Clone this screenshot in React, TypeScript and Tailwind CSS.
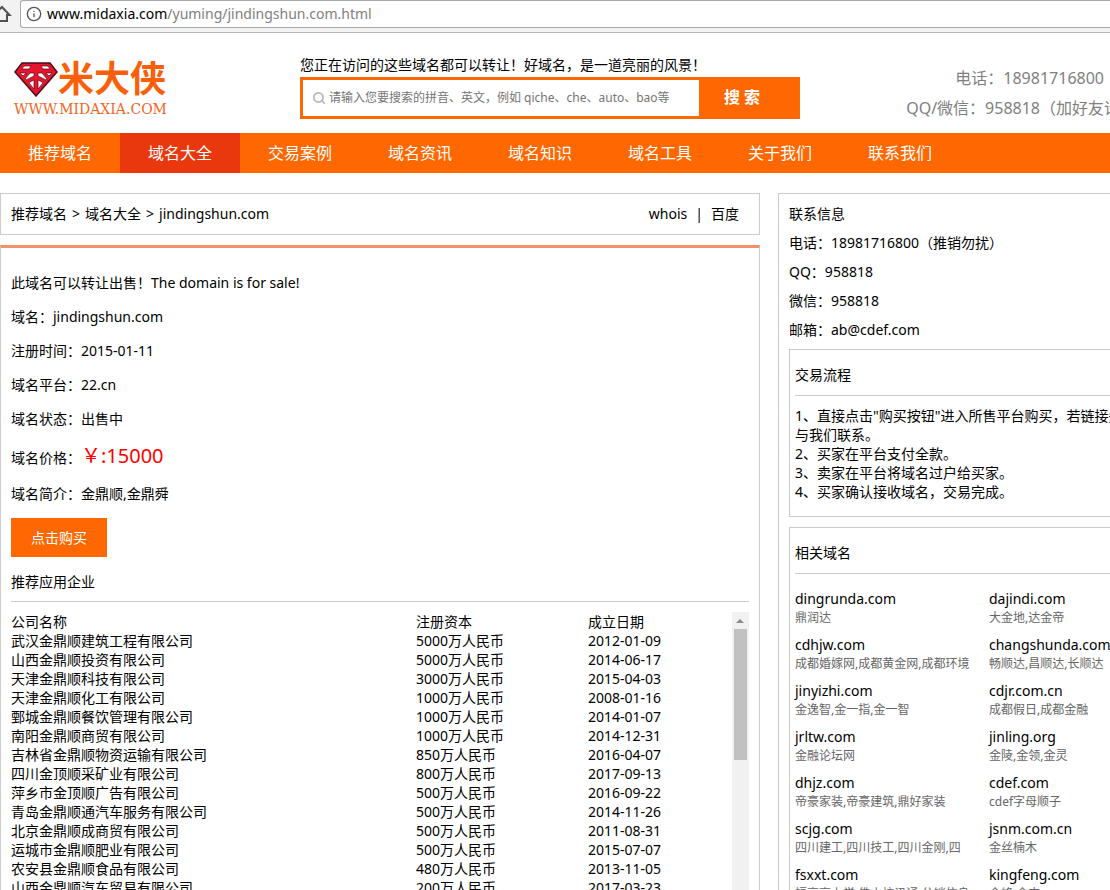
import { Info, Search } from "lucide-react";

const navItems = ["推荐域名", "域名大全", "交易案例", "域名资讯", "域名知识", "域名工具", "关于我们", "联系我们"];

const details = [
  { label: "域名", value: "jindingshun.com" },
  { label: "注册时间", value: "2015-01-11" },
  { label: "域名平台", value: "22.cn" },
  { label: "域名状态", value: "出售中" },
];

const companies = [
  { name: "武汉金鼎顺建筑工程有限公司", capital: "5000万人民币", date: "2012-01-09" },
  { name: "山西金鼎顺投资有限公司", capital: "5000万人民币", date: "2014-06-17" },
  { name: "天津金鼎顺科技有限公司", capital: "3000万人民币", date: "2015-04-03" },
  { name: "天津金鼎顺化工有限公司", capital: "1000万人民币", date: "2008-01-16" },
  { name: "鄄城金鼎顺餐饮管理有限公司", capital: "1000万人民币", date: "2014-01-07" },
  { name: "南阳金鼎顺商贸有限公司", capital: "1000万人民币", date: "2014-12-31" },
  { name: "吉林省金鼎顺物资运输有限公司", capital: "850万人民币", date: "2016-04-07" },
  { name: "四川金顶顺采矿业有限公司", capital: "800万人民币", date: "2017-09-13" },
  { name: "萍乡市金顶顺广告有限公司", capital: "500万人民币", date: "2016-09-22" },
  { name: "青岛金鼎顺通汽车服务有限公司", capital: "500万人民币", date: "2014-11-26" },
  { name: "北京金鼎顺成商贸有限公司", capital: "500万人民币", date: "2011-08-31" },
  { name: "运城市金鼎顺肥业有限公司", capital: "500万人民币", date: "2015-07-07" },
  { name: "农安县金鼎顺食品有限公司", capital: "480万人民币", date: "2013-11-05" },
  { name: "山西金鼎顺汽车贸易有限公司", capital: "200万人民币", date: "2017-03-23" },
];

const contacts = ["电话：18981716800（推销勿扰）", "QQ：958818", "微信：958818", "邮箱：ab@cdef.com"];

const steps = [
  "直接点击\"购买按钮\"进入所售平台购买，若链接失效时，请与我们联系。",
  "买家在平台支付全款。",
  "卖家在平台将域名过户给买家。",
  "买家确认接收域名，交易完成。",
];

const related = [
  { domain: "dingrunda.com", note: "鼎润达" },
  { domain: "dajindi.com", note: "大金地,达金帝" },
  { domain: "cdhjw.com", note: "成都婚嫁网,成都黄金网,成都环境" },
  { domain: "changshunda.com", note: "畅顺达,昌顺达,长顺达" },
  { domain: "jinyizhi.com", note: "金逸智,金一指,金一智" },
  { domain: "cdjr.com.cn", note: "成都假日,成都金融" },
  { domain: "jrltw.com", note: "金融论坛网" },
  { domain: "jinling.org", note: "金陵,金领,金灵" },
  { domain: "dhjz.com", note: "帝豪家装,帝豪建筑,鼎好家装" },
  { domain: "cdef.com", note: "cdef字母顺子" },
  { domain: "scjg.com", note: "四川建工,四川技工,四川金刚,四" },
  { domain: "jsnm.com.cn", note: "金丝楠木" },
  { domain: "fsxxt.com", note: "福享享上学,佛山校讯通,分销信息" },
  { domain: "kingfeng.com", note: "金峰,金丰" },
];

function AddressBar() {
  return (
    <div className="flex h-[33px] shrink-0 items-start border-b border-[#b5b5b5] bg-[#f2f2f2]">
      <button aria-label="主页" className="-ml-2 mt-1 w-5 text-[#505050]">
        <svg width="20" height="20" viewBox="0 0 20 20" fill="none" stroke="currentColor" strokeWidth="2">
          <path d="M1.500 11L10 3l7.500 8H15v6H5v-6z" />
        </svg>
      </button>
      <div className="ml-2 flex h-7 flex-1 items-center rounded-l-[3px] border border-r-0 border-[#a9a9a9] bg-white pb-px pl-[5px]">
        <Info size={16} className="text-[#555]" />
        <span className="ml-[5px] text-[14px] text-[#808080]">
          <span className="text-black">www.midaxia.com</span>/yuming/jindingshun.com.html
        </span>
      </div>
    </div>
  );
}

function Logo() {
  return (
    <a href="#" className="block w-[300px] pl-[14px] pt-[26px]">
      <span className="flex h-10 items-center">
        <svg width="44" height="35" viewBox="0 0 44 35">
          <path d="M8 1h28l7 9-21 24L1 10z" fill="#e8132c" stroke="#4a1020" strokeWidth="1.500" />
          <path
            d="M10 4h7l-2 3H8zM27 4h7l2 3h-7zM6 11h6l-3 3zM32 11h6l-3 3zM16 11h4v3l-8 4-1-1zM24 11h4l5 6-1 1-8-4zM16 20l4-2v9l-5-6zM24 18l4 2 1 1-5 6z"
            fill="#fff"
            stroke="#4a1020"
            strokeWidth="0.700"
          />
        </svg>
        <span className="text-[36px] leading-10 font-bold text-[#fb5f0a]">米大侠</span>
      </span>
      <span className="mt-[2px] block font-['DejaVu_Serif',serif] text-[14px] leading-4 text-[#f0661e]">
        WWW.MIDAXIA.COM
      </span>
    </a>
  );
}

function Header() {
  return (
    <header className="flex h-[100px]">
      <Logo />
      <form className="w-[500px] pt-[21px]">
        <label htmlFor="keyword" className="mb-px block text-[14px] leading-[22px]">
          您正在访问的这些域名都可以转让！好域名，是一道亮丽的风景！
        </label>
        <div className="flex h-[42px] border-[3px] border-[#ff6700]">
          <div className="flex flex-1 items-center pl-[9px]">
            <Search size={14} strokeWidth={3} className="text-[#b8b8b8]" />
            <input
              id="keyword"
              type="text"
              placeholder="请输入您要搜索的拼音、英文，例如 qiche、che、auto、bao等"
              className="ml-[3px] min-w-0 flex-1 text-[12px] outline-none placeholder:text-[#757575]"
            />
          </div>
          <button type="button" className="w-[98px] bg-[#ff6700] pr-3 pb-[2px] text-[16px] font-bold text-white">
            搜 索
          </button>
        </div>
      </form>
      <div className="flex-1 pt-[30px] text-right text-[16px] leading-[30px] text-[#808080]">
        <p className="pr-24">电话：18981716800</p>
        <p>QQ/微信：958818（加好友请注明来意）</p>
      </div>
    </header>
  );
}

function Nav() {
  return (
    <nav className="flex h-10 bg-[#ff6700]">
      {navItems.map((item) => (
        <a
          key={item}
          href="#"
          className={`w-[120px] text-center text-[16px] leading-10 text-white ${item === "域名大全" ? "bg-[#e9380d]" : ""}`}
        >
          {item}
        </a>
      ))}
    </nav>
  );
}

function CompanyTable() {
  return (
    <div className="flex">
      <table className="flex-1 table-fixed text-left leading-[19px]">
        <thead>
          <tr>
            <th className="w-[405px] font-normal">公司名称</th>
            <th className="w-[172px] font-normal">注册资本</th>
            <th className="font-normal">成立日期</th>
          </tr>
        </thead>
        <tbody>
          {companies.map((c) => (
            <tr key={c.name}>
              <td>{c.name}</td>
              <td>{c.capital}</td>
              <td>{c.date}</td>
            </tr>
          ))}
        </tbody>
      </table>
      {/* scrollbar */}
      <div className="flex w-[17px] flex-col items-center bg-[#f1f1f1]">
        <svg width="17" height="17" viewBox="0 0 17 17">
          <path d="M4 11l4-4 4 4z" fill="#8a8a8a" />
        </svg>
        <div className="h-[131px] w-[13px] bg-[#c1c1c1]" />
      </div>
    </div>
  );
}

function DomainDetail() {
  return (
    <section className="mt-[10px] border border-t-[3px] border-[#ccc] border-t-[#f2926b] px-[10px] pt-[18px]">
      <p className="leading-[34px]">此域名可以转让出售！The domain is for sale!</p>
      {details.map((d) => (
        <p key={d.label} className="leading-[34px]">
          {`${d.label}：${d.value}`}
        </p>
      ))}
      <p className="leading-[39px]">
        域名价格：<span className="text-[20px] text-[#f00]">￥:15000</span>
      </p>
      <p className="leading-[34px]">域名简介：金鼎顺,金鼎舜</p>
      <button className="mt-[7px] block h-[39px] w-24 bg-[#ff6700] text-white">点击购买</button>
      <h2 className="mb-[10px] border-b border-[#ccc] pt-[5px] leading-[39px]">推荐应用企业</h2>
      <CompanyTable />
    </section>
  );
}

function Sidebar() {
  return (
    <aside className="ml-[18px] flex-1 border border-[#ccc] px-[10px] pt-[5px]">
      <h2 className="leading-[29px]">联系信息</h2>
      {contacts.map((c) => (
        <p key={c} className="leading-[29px]">{c}</p>
      ))}
      <div className="mt-[5px] border border-[#ccc] px-[5px] pb-[15px]">
        <h3 className="mb-[10px] border-b border-[#ccc] pt-[5px] leading-10">交易流程</h3>
        <ol className="leading-[19px]">
          {steps.map((s, i) => (
            <li key={s}>{`${i + 1}、${s}`}</li>
          ))}
        </ol>
      </div>
      <div className="mt-[10px] border border-[#ccc] px-[5px]">
        <h3 className="mb-[15px] border-b border-[#ccc] pt-[5px] leading-10">相关域名</h3>
        <ul className="grid grid-cols-2">
          {related.map((r) => (
            <li key={r.domain} className="h-[46px]">
              <a href="#" className="block leading-5">{r.domain}</a>
              <p className="text-[12px] leading-[18px] whitespace-nowrap text-[#666]">{r.note}</p>
            </li>
          ))}
        </ul>
      </div>
    </aside>
  );
}

export default function App() {
  return (
    <div className="flex h-screen flex-col overflow-hidden bg-white font-['Noto_Sans','Noto_Sans_CJK_SC',sans-serif] text-[14px] text-black">
      <AddressBar />
      <div className="flex-1 overflow-hidden">
        <div className="min-w-[1200px]">
          <Header />
          <Nav />
          <main className="mt-5 flex items-start">
            <div className="w-[760px]">
              <div className="flex h-[42px] items-center justify-between border border-[#ccc] pr-5 pb-[2px] pl-[10px]">
                <p className="flex gap-[5px]">
                  <a href="#">推荐域名</a>
                  <span>&gt;</span>
                  <a href="#">域名大全</a>
                  <span>&gt;</span>
                  <span>jindingshun.com</span>
                </p>
                <p className="flex gap-2">
                  <a href="#">whois</a>
                  <span>|</span>
                  <a href="#">百度</a>
                </p>
              </div>
              <DomainDetail />
            </div>
            <Sidebar />
          </main>
        </div>
      </div>
    </div>
  );
}
